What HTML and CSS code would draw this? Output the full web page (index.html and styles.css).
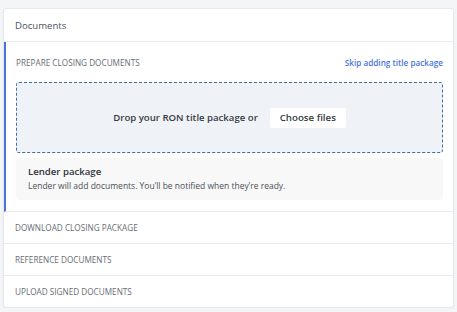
FILE: index.html
```html
<!DOCTYPE html>
<html>
<head>
<meta charset="utf-8">
<link rel="stylesheet" href="styles.css">
</head>
<body>
<div class="card">
  <div class="card-header">Documents</div>
  <div class="section active">
    <div class="section-head">
      <span class="section-title">Prepare closing documents</span>
      <a class="skip">Skip adding title package</a>
    </div>
    <div class="dropzone">
      <span class="drop-text">Drop your RON title package or</span>
      <button class="choose">Choose files</button>
    </div>
    <div class="lender">
      <div class="lender-title">Lender package</div>
      <div class="lender-sub">Lender will add documents. You’ll be notified when they’re ready.</div>
    </div>
  </div>
  <div class="section row"><span class="section-title">Download closing package</span></div>
  <div class="section row"><span class="section-title">Reference documents</span></div>
  <div class="section row last"><span class="section-title">Upload signed documents</span></div>
</div>
</body>
</html>
```
FILE: styles.css
```css
* { box-sizing: border-box; }
html, body { margin: 0; padding: 0; }
body {
  background: #f4f5f7;
  font-family: "Open Sans", "Liberation Sans", sans-serif;
  padding: 8px 4px 0 3px;
}
.card {
  background: #fff;
  border: 1px solid #e6e8eb;
  border-radius: 3px;
  box-shadow: 0 1px 2px rgba(0,0,0,0.06);
  width: 451px;
}
.card-header {
  height: 33px;
  display: flex;
  align-items: center;
  padding-left: 11px;
  font-size: 9.6px;
  font-weight: 500;
  color: #4d545e;
  border-bottom: 1px solid #e9ebee;
}
.section {
  border-bottom: 1px solid #e9ebee;
}
.section.active {
  border-left: 2px solid #4a74d8;
  padding: 0 10px 11px 10px;
}
.section-head {
  height: 40px;
  display: flex;
  align-items: center;
  justify-content: space-between;
}
.section-title {
  text-transform: uppercase;
  font-size: 8.2px;
  color: #686d74;
}
.skip {
  font-size: 8.2px;
  font-weight: 600;
  color: #4a74d8;
}
.dropzone {
  height: 71px;
  background: #eff3f8;
  border: 1px dashed #3f6ca6;
  border-radius: 3px;
  display: flex;
  align-items: center;
  justify-content: center;
  gap: 12px;
}
.drop-text {
  font-size: 9.6px;
  font-weight: 600;
  color: #363b43;
}
.choose {
  font-family: inherit;
  background: #fff;
  border: none;
  border-radius: 2px;
  height: 20px;
  width: 76px;
  padding: 0;
  font-size: 9.7px;
  font-weight: 600;
  color: #363b43;
}
.lender {
  margin-top: 5px;
  background: #f8f8f9;
  border-radius: 4px;
  height: 42px;
  padding: 7px 12px 0 12px;
}
.lender-title {
  font-size: 9.6px;
  font-weight: 600;
  color: #2f343b;
  line-height: 14px;
}
.lender-sub {
  font-size: 8.5px;
  color: #4a4f57;
  line-height: 13px;
}
.row {
  height: 32px;
  display: flex;
  align-items: center;
  padding-left: 11px;
}
.row.last { border-bottom: none; height: 31px; }
```
